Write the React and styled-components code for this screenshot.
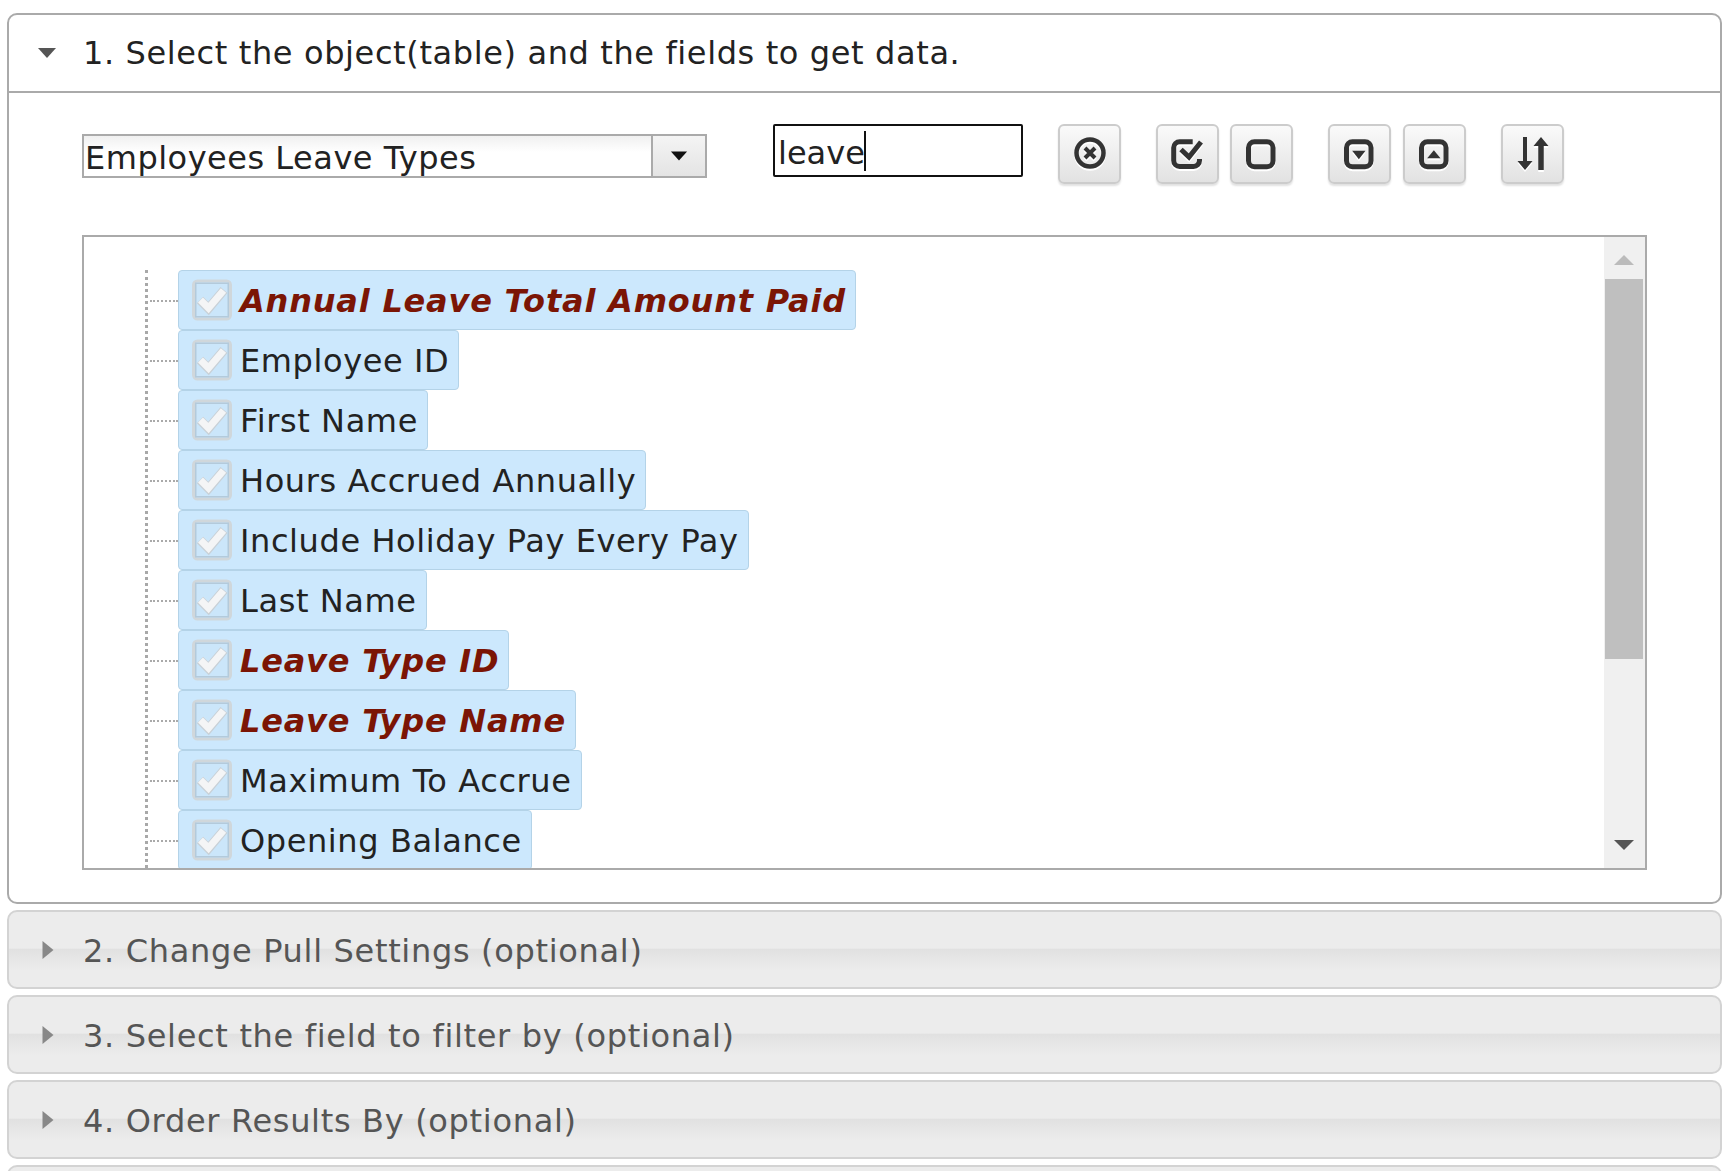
import styled, { createGlobalStyle } from "styled-components";

const GlobalStyle = createGlobalStyle`
  html, body {
    margin: 0;
    height: 100%;
    overflow: hidden;
    background: #fff;
  }
  body {
    font-family: "DejaVu Sans", Verdana, sans-serif;
    color: #222;
  }
`;

const Page = styled.div`
  height: 100vh;
  box-sizing: border-box;
  overflow: hidden;
  padding: 13px 4px 0 7px;
  display: flex;
  flex-direction: column;
  gap: 6px;
`;

const OpenPanel = styled.section`
  box-sizing: border-box;
  height: 891px;
  border: 2px solid #aaa;
  border-radius: 10px;
  background: #fff;
  display: flex;
  flex-direction: column;
  flex: none;
`;

const OpenHeader = styled.header`
  box-sizing: border-box;
  height: 78px;
  flex: none;
  display: flex;
  align-items: center;
  padding-left: 28px;
  gap: 26px;
  border-bottom: 2px solid #aaa;
  font-size: 32px;
  letter-spacing: 0.62px;
  color: #222;
`;

const ClosedPanel = styled.header`
  box-sizing: border-box;
  height: 79px;
  flex: none;
  display: flex;
  align-items: center;
  padding-left: 29px;
  gap: 25px;
  border: 2px solid #d3d3d3;
  border-radius: 10px;
  font-size: 32px;
  letter-spacing: 0.68px;
  color: #555;
  background: linear-gradient(
    #ececec 0%,
    #ececec 48%,
    #e1e1e1 50%,
    #e6e6e6 62%,
    #ececec 78%,
    #ececec 100%
  );
`;

const ClosedTitle = styled.span`
  padding-top: 2px;
`;

const Toolbar = styled.div`
  flex: none;
  height: 142px;
  box-sizing: border-box;
  padding: 31px 0 0 73px;
  display: flex;
  align-items: flex-start;
`;

const SelectBox = styled.div`
  box-sizing: border-box;
  width: 625px;
  height: 44px;
  margin-top: 10px;
  border: 2px solid #aaa;
  display: flex;
  align-items: center;
  font-size: 32px;
  letter-spacing: 0.5px;
  background: linear-gradient(#f0f0f0, #fff 40%);
`;

const SelectValue = styled.span`
  flex: 1;
  padding: 4px 0 0 1px;
  white-space: nowrap;
`;

const SelectButton = styled.span`
  box-sizing: border-box;
  width: 54px;
  height: 100%;
  flex: none;
  border-left: 2px solid #aaa;
  display: flex;
  align-items: center;
  justify-content: center;
  background: linear-gradient(#f4f4f4, #e4e4e4);
`;

const SearchInput = styled.div`
  box-sizing: border-box;
  width: 250px;
  height: 53px;
  margin-left: 66px;
  border: 2px solid #111;
  border-radius: 2px;
  padding: 4px 0 0 3px;
  display: flex;
  align-items: center;
  font-size: 32px;
  color: #222;
`;

const Caret = styled.span`
  width: 2px;
  height: 40px;
  background: #111;
  margin: -4px 0 0 -1px;
`;

const ButtonGroup = styled.div`
  display: flex;
  gap: ${(p) => p.$inner || 11}px;
  margin-left: ${(p) => p.$gap}px;
`;

const IconButton = styled.button`
  box-sizing: border-box;
  width: 63px;
  height: 60px;
  padding: 0 0 3px;
  border: 2px solid #ccc;
  border-radius: 6px;
  background: linear-gradient(#fafafa, #e2e2e2);
  box-shadow: 0 2px 2px rgba(0, 0, 0, 0.12);
  display: flex;
  align-items: center;
  justify-content: center;
  svg {
    filter: drop-shadow(0 2px 0 #fff);
  }
`;

const TreeBox = styled.div`
  box-sizing: border-box;
  width: 1565px;
  height: 635px;
  margin-left: 73px;
  border: 2px solid #aaa;
  display: flex;
  overflow: hidden;
`;

const TreeList = styled.ul`
  flex: 1;
  list-style: none;
  margin: 0;
  padding: 33px 0 0 66px;
  overflow: hidden;
  position: relative;
  &::before {
    content: "";
    position: absolute;
    left: 61px;
    top: 33px;
    bottom: 0;
    border-left: 3px dotted #a8a8a8;
  }
`;

const TreeRow = styled.li`
  height: 60px;
  display: flex;
  align-items: center;
  &::before {
    content: "";
    width: 28px;
    flex: none;
    margin-top: 2px;
    border-top: 2px dotted #aaa;
  }
`;

const FieldChip = styled.span`
  box-sizing: border-box;
  height: 60px;
  display: flex;
  align-items: center;
  padding: 0 9px 0 12px;
  gap: 7px;
  background: #cce8fd;
  border: 1px solid #b4d3e8;
  border-radius: 4px;
  font-size: 32px;
  white-space: nowrap;
  letter-spacing: ${(p) => (p.$key ? 0.8 : 0.6)}px;
  color: ${(p) => (p.$key ? "#7b1505" : "#222")};
  font-weight: ${(p) => (p.$key ? 700 : 400)};
  font-style: ${(p) => (p.$key ? "italic" : "normal")};
`;

const FieldName = styled.span`
  padding-top: 2px;
`;

const ScrollTrack = styled.div`
  flex: none;
  width: 41px;
  padding-right: 2px;
  box-sizing: border-box;
  background: #f0f0f0;
  display: flex;
  flex-direction: column;
  align-items: center;
  position: relative;
`;

const ScrollThumb = styled.div`
  position: absolute;
  left: 1px;
  right: 2px;
  top: 42px;
  height: 380px;
  background: #bfbfbf;
`;

const ArrowUp = styled.span`
  margin-top: 18px;
  border-left: 10px solid transparent;
  border-right: 10px solid transparent;
  border-bottom: 10px solid #bbb;
`;

const ArrowDown = styled.span`
  margin-top: auto;
  margin-bottom: 18px;
  border-left: 10px solid transparent;
  border-right: 10px solid transparent;
  border-top: 10px solid #555;
`;

const Triangle = ({ dir = "down", color = "#555", size = 20 }) => (
  <svg width={size} height={size} viewBox="0 0 20 20" style={{ flex: "none" }}>
    {dir === "down" ? (
      <path d="M1 5h18l-9 10z" fill={color} />
    ) : (
      <path d="M4.5 1l11 9-11 9z" fill={color} />
    )}
  </svg>
);

const CheckMark = () => (
  <svg width="42" height="42" viewBox="0 0 42 42" style={{ flex: "none" }}>
    <rect x="2.500" y="2" width="37" height="38" rx="4" fill="#cbe6fa" stroke="#d0d7db" strokeWidth="3" />
    <rect x="4.750" y="4.250" width="32.500" height="33.500" fill="none" stroke="#b3cadb" strokeWidth="1.500" />
    <path d="M9 21l8.500 8.500L33 11" fill="none" stroke="#c9d1d7" strokeWidth="9" />
    <path d="M9.500 21l8 8L32.500 11.500" fill="none" stroke="#f4f5f6" strokeWidth="7" />
  </svg>
);

const Icon = ({ children }) => (
  <svg width="36" height="36" viewBox="0 0 36 36">
    {children}
  </svg>
);

const ink = "#333";

const ClearIcon = () => (
  <Icon>
    <circle cx="18" cy="18" r="13.500" fill="none" stroke={ink} strokeWidth="4.500" />
    <path d="M13 13l10 10M23 13l-10 10" stroke={ink} strokeWidth="4" />
  </Icon>
);

const CheckAllIcon = () => (
  <Icon>
    <path
      d="M29.500 24v1.500a6 6 0 0 1-6 6H9.700a6 6 0 0 1-6-6V12.700a6 6 0 0 1 6-6h13"
      fill="none"
      stroke={ink}
      strokeWidth="5"
    />
    <path d="M11 14.500l8 7.500L31 7" fill="none" stroke={ink} strokeWidth="5" />
  </Icon>
);

const BoxIcon = ({ children }) => (
  <Icon>
    <rect x="4.500" y="6.700" width="24.500" height="25" rx="6" fill="none" stroke={ink} strokeWidth="5" />
    {children}
  </Icon>
);

const SortIcon = () => (
  <Icon>
    <path d="M10 2v28" stroke={ink} strokeWidth="4" />
    <path d="M26 10v25" stroke={ink} strokeWidth="5.500" />
    <path d="M2.500 26h15L10 35zM18.500 11h15L26 2z" fill={ink} />
  </Icon>
);

const FIELDS = [
  { name: "Annual Leave Total Amount Paid", key: true },
  { name: "Employee ID" },
  { name: "First Name" },
  { name: "Hours Accrued Annually" },
  { name: "Include Holiday Pay Every Pay" },
  { name: "Last Name" },
  { name: "Leave Type ID", key: true },
  { name: "Leave Type Name", key: true },
  { name: "Maximum To Accrue" },
  { name: "Opening Balance" },
];

const CLOSED = [
  "2. Change Pull Settings (optional)",
  "3. Select the field to filter by (optional)",
  "4. Order Results By (optional)",
  "",
];

export default function App() {
  return (
    <>
      <GlobalStyle />
      <Page>
        <OpenPanel>
          <OpenHeader>
            <Triangle />
            <span>1. Select the object(table) and the fields to get data.</span>
          </OpenHeader>
          <Toolbar>
            <SelectBox>
              <SelectValue>Employees Leave Types</SelectValue>
              <SelectButton>
                <Triangle color="#111" size={18} />
              </SelectButton>
            </SelectBox>
            <SearchInput>
              leave
              <Caret />
            </SearchInput>
            <ButtonGroup $gap={35}>
              <IconButton aria-label="Clear">
                <ClearIcon />
              </IconButton>
            </ButtonGroup>
            <ButtonGroup $gap={35}>
              <IconButton aria-label="Check all">
                <CheckAllIcon />
              </IconButton>
              <IconButton aria-label="Uncheck all">
                <BoxIcon />
              </IconButton>
            </ButtonGroup>
            <ButtonGroup $gap={35} $inner={12}>
              <IconButton aria-label="Expand">
                <BoxIcon>
                  <path d="M10.200 15.800h13.300l-6.650 8.400z" fill={ink} />
                </BoxIcon>
              </IconButton>
              <IconButton aria-label="Collapse">
                <BoxIcon>
                  <path d="M10.200 23.200h13.300l-6.650-8z" fill={ink} />
                </BoxIcon>
              </IconButton>
            </ButtonGroup>
            <ButtonGroup $gap={35}>
              <IconButton aria-label="Sort">
                <SortIcon />
              </IconButton>
            </ButtonGroup>
          </Toolbar>
          <TreeBox>
            <TreeList>
              {FIELDS.map((f) => (
                <TreeRow key={f.name}>
                  <FieldChip $key={f.key}>
                    <CheckMark />
                    <FieldName>{f.name}</FieldName>
                  </FieldChip>
                </TreeRow>
              ))}
            </TreeList>
            <ScrollTrack>
              <ScrollThumb />
              <ArrowUp />
              <ArrowDown />
            </ScrollTrack>
          </TreeBox>
        </OpenPanel>
        {CLOSED.map((title, i) => (
          <ClosedPanel key={i}>
            <Triangle dir="right" color="#888" />
            <ClosedTitle>{title}</ClosedTitle>
          </ClosedPanel>
        ))}
      </Page>
    </>
  );
}
